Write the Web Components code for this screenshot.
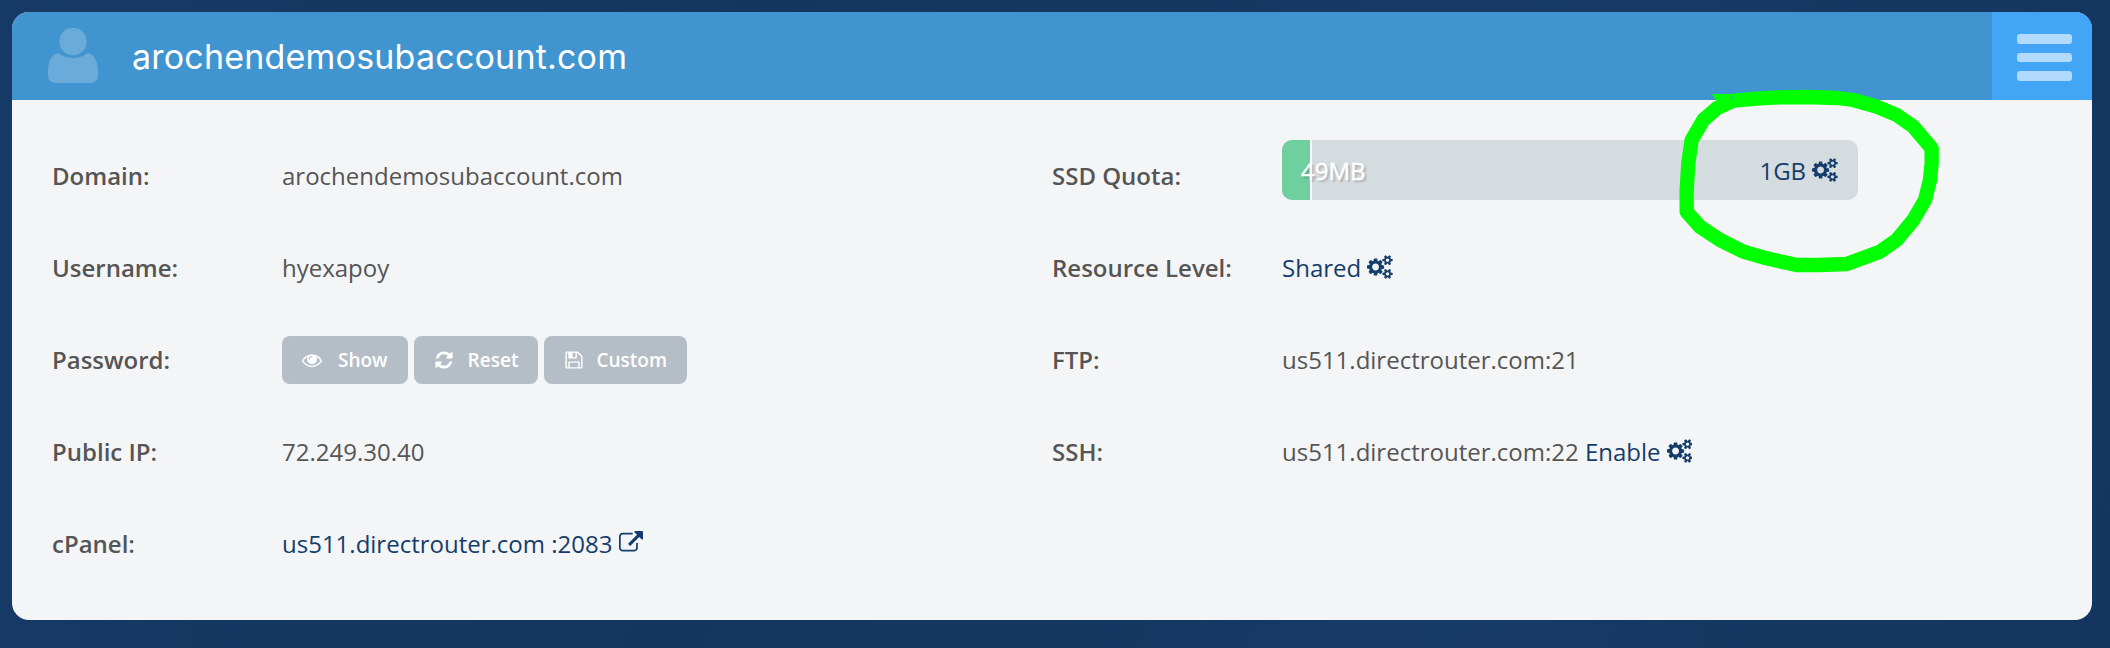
<!DOCTYPE html>
<html lang="en">
<head>
<meta charset="utf-8">
<title>arochendemosubaccount.com</title>
<style>
  html, body { margin: 0; height: 100%; }
  body {
    background: linear-gradient(100deg, #163a66 0%, #14355f 35%, #163a66 70%, #14355f 100%);
    font-family: "Open Sans", "Liberation Sans", sans-serif;
    overflow: hidden;
  }
</style>
</head>
<body>

<account-card>
  <card-header slot="header" title-text="arochendemosubaccount.com"></card-header>
  <div slot="left">
    <info-row label="Domain:">arochendemosubaccount.com</info-row>
    <info-row label="Username:">hyexapoy</info-row>
    <info-row label="Password:">
      <pw-button icon="eye" gap="16">Show</pw-button>
      <pw-button icon="refresh" gap="14">Reset</pw-button>
      <pw-button icon="save" gap="12">Custom</pw-button>
    </info-row>
    <info-row label="Public IP:">72.249.30.40</info-row>
    <info-row label="cPanel:"><link-text>us511.directrouter.com :2083 <fa-icon name="external"></fa-icon></link-text></info-row>
  </div>
  <div slot="right">
    <info-row label="SSD Quota:"><quota-bar used="49MB" total="1GB"></quota-bar></info-row>
    <info-row label="Resource Level:"><link-text>Shared <fa-icon name="cogs"></fa-icon></link-text></info-row>
    <info-row label="FTP:">us511.directrouter.com:21</info-row>
    <info-row label="SSH:">us511.directrouter.com:22 <link-text>Enable <fa-icon name="cogs"></fa-icon></link-text></info-row>
  </div>
  <green-scribble slot="overlay"></green-scribble>
</account-card>

<script>
const ICONS = {
  cogs: ["0 0 1920 1792", "M896 896q0-106-75-181t-181-75-181 75-75 181 75 181 181 75 181-75 75-181zm768 512q0-52-38-90t-90-38-90 38-38 90q0 53 37.5 90.5t90.5 37.5 90.5-37.5 37.5-90.5zm0-1024q0-52-38-90t-90-38-90 38-38 90q0 53 37.5 90.5t90.5 37.5 90.5-37.5 37.5-90.5zm-384 421v185q0 10-7 19.5t-16 10.5l-155 24q-11 35-32 76 34 48 90 115 7 11 7 20 0 12-7 19-23 30-82.5 89.5t-78.5 59.5q-11 0-21-7l-115-90q-37 19-77 31-11 108-23 155-7 24-30 24h-186q-11 0-20-7.5t-10-17.5l-23-153q-34-10-75-31l-118 89q-7 7-20 7-11 0-21-8-144-133-144-160 0-9 7-19 10-14 41-53t47-61q-23-44-35-82l-152-24q-10-1-17-9.5t-7-19.5v-185q0-10 7-19.5t16-10.5l155-24q11-35 32-76-34-48-90-115-7-11-7-20 0-12 7-20 22-30 82-89t79-59q11 0 21 7l115 90q34-18 77-32 11-108 23-154 7-24 30-24h186q11 0 20 7.5t10 17.5l23 153q34 10 75 31l118-89q8-7 20-7 11 0 21 8 144 133 144 160 0 8-7 19-12 16-42 54t-45 60q23 48 34 82l152 23q10 2 17 10.5t7 19.5zm640 533v140q0 16-149 31-12 27-30 52 51 113 51 138 0 4-4 7-122 71-124 71-8 0-46-47t-52-68q-20 2-30 2t-30-2q-14 21-52 68t-46 47q-2 0-124-71-4-3-4-7 0-25 51-138-18-25-30-52-149-15-149-31v-140q0-16 149-31 13-29 30-52-51-113-51-138 0-4 4-7 4-2 35-20t59-34 30-16q8 0 46 46.5t52 67.5q20-2 30-2t30 2q51-71 92-112l6-2q4 0 124 70 4 3 4 7 0 25-51 138 17 23 30 52 149 15 149 31zm0-1024v140q0 16-149 31-12 27-30 52 51 113 51 138 0 4-4 7-122 71-124 71-8 0-46-47t-52-68q-20 2-30 2t-30-2q-14 21-52 68t-46 47q-2 0-124-71-4-3-4-7 0-25 51-138-18-25-30-52-149-15-149-31v-140q0-16 149-31 13-29 30-52-51-113-51-138 0-4 4-7 4-2 35-20t59-34 30-16q8 0 46 46.5t52 67.5q20-2 30-2t30 2q51-71 92-112l6-2q4 0 124 70 4 3 4 7 0 25-51 138 17 23 30 52 149 15 149 31z"],
  external: ["0 0 1792 1792", "M1408 928v320q0 119-84.5 203.5t-203.5 84.5h-832q-119 0-203.5-84.5t-84.5-203.5v-832q0-119 84.5-203.5t203.5-84.5h704q14 0 23 9t9 23v64q0 14-9 23t-23 9h-704q-66 0-113 47t-47 113v832q0 66 47 113t113 47h832q66 0 113-47t47-113v-320q0-14 9-23t23-9h64q14 0 23 9t9 23zm384-864v512q0 26-19 45t-45 19-45-19l-176-176-652 652q-10 10-23 10t-23-10l-114-114q-10-10-10-23t10-23l652-652-176-176q-19-19-19-45t19-45 45-19h512q26 0 45 19t19 45z"],
  refresh: ["0 0 1792 1792", "M1639 1056q0 5-1 7-64 268-268 434.5t-478 166.5q-146 0-282.5-55t-243.5-157l-129 129q-19 19-45 19t-45-19-19-45v-448q0-26 19-45t45-19h448q26 0 45 19t19 45-19 45l-137 137q71 66 161 102t187 36q134 0 250-65t186-179q11-17 53-117 8-23 30-23h192q13 0 22.5 9.5t9.5 22.5zm25-800v448q0 26-19 45t-45 19h-448q-26 0-45-19t-19-45 19-45l138-138q-148-137-349-137-134 0-250 65t-186 179q-11 17-53 117-8 23-30 23h-199q-13 0-22.5-9.5t-9.5-22.5v-7q65-268 270-434.5t480-166.5q146 0 284 55.5t245 156.5l130-129q19-19 45-19t45 19 19 45z"],
  eye: ["0 0 1792 1792", "M1664 960q-152-236-381-353 61 104 61 225 0 185-131.5 316.5t-316.5 131.5-316.5-131.5-131.5-316.5q0-121 61-225-229 117-381 353 133 205 333.5 326.5t434.5 121.5 434.5-121.5 333.5-326.5zm-720-384q0-20-14-34t-34-14q-125 0-214.5 89.5t-89.5 214.5q0 20 14 34t34 14 34-14 14-34q0-86 61-147t147-61q20 0 34-14t14-34zm848 384q0 34-20 69-140 230-376.5 368.5t-499.5 138.5-499.5-139-376.5-368q-20-35-20-69t20-69q140-229 376.5-368t499.5-139 499.5 139 376.5 368q20 35 20 69z"],
  save: ["0 0 1792 1792", "M512 1536h768v-384h-768v384zm896 0h128v-896q0-14-10-38.5t-20-34.5l-281-281q-10-10-34-20t-39-10v416q0 40-28 68t-68 28h-576q-40 0-68-28t-28-68v-416h-128v1280h128v-416q0-40 28-68t68-28h832q40 0 68 28t28 68v416zm-384-928v-320q0-13-9.5-22.5t-22.5-9.5h-192q-13 0-22.5 9.5t-9.5 22.5v320q0 13 9.5 22.5t22.5 9.5h192q13 0 22.5-9.5t9.5-22.5zm640 32v928q0 40-28 68t-68 28h-1344q-40 0-68-28t-28-68v-1344q0-40 28-68t68-28h928q40 0 88 20t76 48l280 280q28 28 48 76t20 88z"]
};

class FaIcon extends HTMLElement {
  connectedCallback() {
    const [box, d] = ICONS[this.getAttribute("name")];
    const ratio = box === "0 0 1920 1792" ? 1.07 : 1;
    this.attachShadow({ mode: "open" }).innerHTML = `
      <style>
        :host { display: inline-block; vertical-align: -0.12em; line-height: 0; }
        svg { height: 1em; width: ${ratio}em; fill: currentColor; }
      </style>
      <svg viewBox="${box}"><path d="${d}"/></svg>`;
  }
}
customElements.define("fa-icon", FaIcon);

const cardTemplate = document.createElement("template");
cardTemplate.innerHTML = `
  <style>
    :host {
      display: flex;
      flex-direction: column;
      position: relative;
      box-sizing: border-box;
      width: 2080px;
      height: 608px;
      margin: 12px 0 0 12px;
      background: #f4f5f7;
      border-radius: 17px;
      overflow: hidden;
    }
    .body {
      display: grid;
      grid-template-columns: 1000px 1fr;
      padding: 29px 0 0 40px;
    }
  </style>
  <slot name="header"></slot>
  <div class="body">
    <slot name="left"></slot>
    <slot name="right"></slot>
  </div>
  <slot name="overlay"></slot>`;

class AccountCard extends HTMLElement {
  constructor() {
    super();
    this.attachShadow({ mode: "open" }).appendChild(cardTemplate.content.cloneNode(true));
  }
}
customElements.define("account-card", AccountCard);

class CardHeader extends HTMLElement {
  connectedCallback() {
    this.attachShadow({ mode: "open" }).innerHTML = `
      <style>
        :host {
          display: flex;
          align-items: center;
          height: 88px;
          background: #4094d0;
          color: #fff;
        }
        .avatar { width: 50px; height: 56px; margin: 0 34px 0 36px; flex: none; }
        h1 {
          flex: 1;
          margin: 0;
          font: 400 34px Inter, "Liberation Sans", sans-serif;
          letter-spacing: 0.2px;
        }
        .menu {
          flex: none;
          box-sizing: border-box;
          width: 100px;
          height: 88px;
          padding: 22px 20px 0 25px;
          background: #43a5f6;
          display: flex;
          flex-direction: column;
          gap: 9px;
        }
        .menu i { display: block; height: 9.5px; border-radius: 3px; background: #b2dafe; }
      </style>
      <svg class="avatar" viewBox="0 0 50 56" fill="#fff" fill-opacity=".22">
        <circle cx="25" cy="13.5" r="13.7"/>
        <path d="M10 25Q17 30 25 30Q33 30 40 25C46 26 50 34 50 43V47Q50 55 42 55H8Q0 55 0 47V43C0 34 4 26 10 25Z"/>
      </svg>
      <h1>${this.getAttribute("title-text")}</h1>
      <div class="menu"><i></i><i></i><i></i></div>`;
  }
}
customElements.define("card-header", CardHeader);

const rowTemplate = document.createElement("template");
rowTemplate.innerHTML = `
  <style>
    :host {
      display: grid;
      grid-template-columns: 230px 1fr;
      align-items: center;
      height: 92px;
      font-size: 24px;
      color: #555;
    }
    .label { font-weight: 600; }
    .value.boxes { display: flex; align-items: center; gap: 6px; }
  </style>
  <div class="label"></div>
  <div class="value"><slot></slot></div>`;

class InfoRow extends HTMLElement {
  constructor() {
    super();
    this.attachShadow({ mode: "open" }).appendChild(rowTemplate.content.cloneNode(true));
  }
  connectedCallback() {
    this.shadowRoot.querySelector(".label").textContent = this.getAttribute("label");
    if (this.querySelector("pw-button, quota-bar")) {
      this.shadowRoot.querySelector(".value").classList.add("boxes");
    }
  }
}
customElements.define("info-row", InfoRow);

class LinkText extends HTMLElement {
  constructor() {
    super();
    this.attachShadow({ mode: "open" }).innerHTML = `
      <style>:host { display: inline; color: #143d6b; }</style><slot></slot>`;
  }
}
customElements.define("link-text", LinkText);

class PwButton extends HTMLElement {
  connectedCallback() {
    const gap = this.getAttribute("gap");
    this.attachShadow({ mode: "open" }).innerHTML = `
      <style>
        :host {
          display: inline-flex;
          align-items: center;
          gap: ${gap}px;
          height: 48px;
          margin-top: 2px;
          padding: 0 20px;
          background: #b5bec6;
          border-radius: 8px;
          color: #fff;
          font-size: 19px;
          font-weight: 600;
        }
        fa-icon { font-size: 20px; }
      </style>
      <fa-icon name="${this.getAttribute("icon")}"></fa-icon><span><slot></slot></span>`;
  }
}
customElements.define("pw-button", PwButton);

class QuotaBar extends HTMLElement {
  connectedCallback() {
    this.attachShadow({ mode: "open" }).innerHTML = `
      <style>
        :host {
          display: flex;
          align-items: center;
          position: relative;
          width: 576px;
          height: 60px;
          margin-bottom: 10px;
          background: #d5dce0;
          border-radius: 10px;
          overflow: hidden;
        }
        .fill {
          flex: none;
          width: 28px;
          height: 100%;
          background: #6fcf9e;
          border-right: 2px solid #fff;
        }
        .used {
          position: absolute;
          left: 19px;
          color: #fff;
          -webkit-text-stroke: .4px #fff;
          text-shadow: 2px 2px 2px rgba(0,0,0,.22);
        }
        .total { margin-left: auto; padding-right: 20px; color: #143d6b; }
      </style>
      <div class="fill"></div>
      <span class="used">${this.getAttribute("used")}</span>
      <span class="total">${this.getAttribute("total")} <fa-icon name="cogs"></fa-icon></span>`;
  }
}
customElements.define("quota-bar", QuotaBar);

class GreenScribble extends HTMLElement {
  constructor() {
    super();
    this.attachShadow({ mode: "open" }).innerHTML = `
      <style>
        :host { position: absolute; left: -12px; top: -12px; width: 2110px; height: 648px; pointer-events: none; }
        svg { display: block; }
      </style>
      <svg width="2110" height="648" fill="none" stroke="#00ff00" stroke-width="43" stroke-linejoin="round">
        <g transform="translate(1620 80) scale(.33333)">
          <path d="M340 62L420 55L480 52L560 51L650 54L700 60L770 80L830 105L880 140L935 205L935 250L930 300L915 360L880 420L830 480L780 515L680 552L600 555L530 555L440 535L370 515L300 480L240 440L200 395L200 330L205 250L215 180L250 120L290 85L340 62"/>
          <polygon points="275,42 350,42 300,75" fill="#00ff00" stroke="none"/>
        </g>
      </svg>`;
  }
}
customElements.define("green-scribble", GreenScribble);
</script>
</body>
</html>
